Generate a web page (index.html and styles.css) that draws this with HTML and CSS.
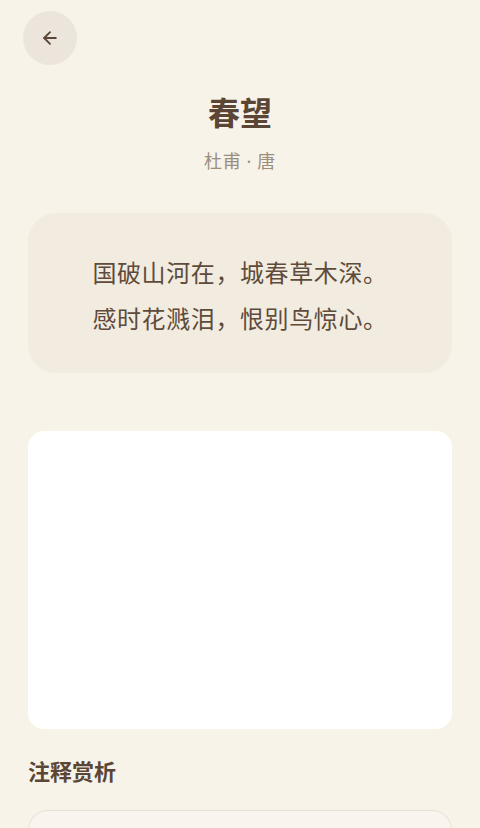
FILE: index.html
```html
<!DOCTYPE html>
<html lang="zh-CN">
<head>
    <meta charset="UTF-8">
    <meta name="viewport" content="width=device-width, initial-scale=1.0">
    <title>春望</title>
    <link rel="stylesheet" href="styles.css">
</head>
<body>
    <div class="top-bar">
        <button class="back-btn" aria-label="返回">
            <svg width="20" height="20" viewBox="0 0 24 24" fill="none" stroke="currentColor" stroke-width="2.2" stroke-linecap="round" stroke-linejoin="round">
                <path d="M19 12H5"/>
                <path d="M12 5l-7 7 7 7"/>
            </svg>
        </button>
    </div>

    <div class="container">
        <h1 class="title">春望</h1>
        <p class="author">杜甫 · 唐</p>

        <div class="poem-card">
            <p>国破山河在，城春草木深。</p>
            <p>感时花溅泪，恨别鸟惊心。</p>
        </div>

        <div class="image-card"></div>

        <h2 class="section-title">注释赏析</h2>

        <div class="notes-card"></div>
    </div>
</body>
</html>
```

FILE: styles.css
```css
body {
    margin: 0;
    background-color: #f7f3e9;
    font-family: "Noto Sans CJK SC", "Noto Sans", sans-serif;
    color: #5b4636;
    overflow: hidden;
}
.top-bar {
    padding: 11px 23px 0;
}
.back-btn {
    width: 54px;
    height: 54px;
    border-radius: 50%;
    border: none;
    background-color: #ebe5db;
    color: #5b4636;
    display: flex;
    align-items: center;
    justify-content: center;
    padding: 0;
    cursor: pointer;
}
.container {
    padding: 0 28px;
}
.title {
    margin: 24px 0 0;
    font-size: 32px;
    line-height: 44px;
    font-weight: 700;
    text-align: center;
}
.author {
    margin: 15px 0 0;
    font-family: "Noto Sans", "Noto Sans CJK SC", sans-serif;
    font-size: 18px;
    line-height: 26px;
    letter-spacing: 0.6px;
    color: #9c8e7f;
    text-align: center;
}
.poem-card {
    margin-top: 39px;
    background-color: #f2ebe0;
    border-radius: 28px;
    padding: 36px 20px 32px;
    text-align: center;
}
.poem-card p {
    margin: 0;
    font-size: 24px;
    line-height: 46px;
    letter-spacing: 0.6px;
    color: #5e4b3b;
}
.image-card {
    margin-top: 58px;
    height: 298px;
    background-color: #fff;
    border-radius: 16px;
}
.section-title {
    margin: 28px 0 0;
    font-size: 22px;
    line-height: 26px;
    font-weight: 700;
}
.notes-card {
    margin-top: 27px;
    height: 120px;
    background-color: #f9f5ee;
    border: 1px solid #e6dfd3;
    border-radius: 20px;
}
```
